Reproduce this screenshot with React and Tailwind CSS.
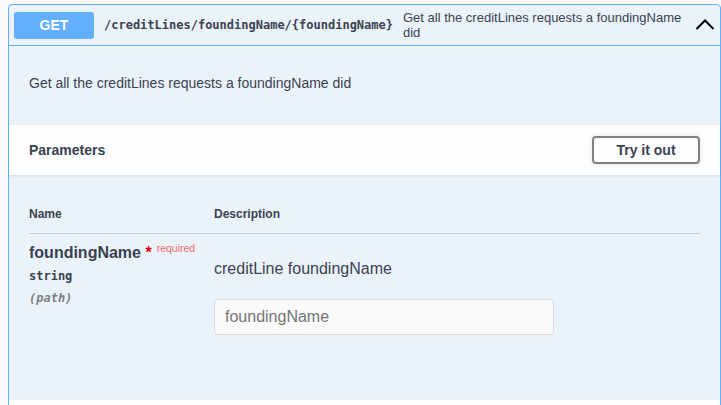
import { useState } from "react";

const sans = { fontFamily: '"Liberation Sans", Arial, sans-serif' };

/* Petite flèche du bouton de repli */
function Chevron() {
  return (
    <svg width="20" height="20" viewBox="0 0 20 20" className="shrink-0">
      <polyline points="1.5,14 10,5.5 18.5,14" fill="none" stroke="#000" strokeWidth="2" />
    </svg>
  );
}

export default function App() {
  const [value, setValue] = useState("");

  return (
    <div className="w-[721px] h-[405px] overflow-hidden bg-[#fafafa] pt-1 pl-2 text-[#3b4151]" style={sans}>
      <div className="border border-[#61affe] rounded-[4px] bg-[#ebf3fa]">
        {/* ---- En-tête de l'opération ---- */}
        <div className="flex items-center h-[41px] px-[5px] border-b border-[#61affe]">
          <span className="w-[80px] h-[27px] shrink-0 flex items-center justify-center rounded-[3px] bg-[#61affe] text-white text-sm font-bold">
            GET
          </span>
          <span
            className="px-[10px] text-[12px] font-bold whitespace-nowrap"
            style={{ fontFamily: '"DejaVu Sans Mono", monospace' }}
          >
            /creditLines/foundingName/&#8203;{"{foundingName}"}
          </span>
          <span className="flex-1 text-[13px] leading-[15px] pr-[8px]">
            Get all the creditLines requests a foundingName did
          </span>
          <Chevron />
        </div>

        {/* ---- Description ---- */}
        <div className="px-5 pt-[28px] pb-[32px]">
          <p className="text-sm leading-[19px]">Get all the creditLines requests a foundingName did</p>
        </div>

        {/* ---- Paramètres ---- */}
        <div className="flex items-center justify-between h-[50px] px-5 bg-white/80 shadow-[0_1px_2px_rgba(0,0,0,0.1)]">
          <h4 className="text-sm font-bold">Parameters</h4>
          <button className="w-[108px] h-[28px] border-2 border-[#808080] rounded-[4px] text-sm font-bold shadow-[0_0_5px_rgba(0,0,0,0.1)]">
            Try it out
          </button>
        </div>

        <div className="px-5 pt-5 pb-[65px]">
          <div className="flex h-[39px] items-center border-b border-[#c6cdd7] text-[12px] font-bold">
            <span className="w-[185px]">Name</span>
            <span>Description</span>
          </div>
          <div className="flex">
            <div className="w-[185px] pt-[10px]">
              <div className="flex items-start">
                <span className="text-base font-bold leading-[18px]">
                  foundingName<span className="text-red-600">&nbsp;*</span>
                </span>
                <span className="text-[10.5px] leading-[11px] pl-[5px] text-[#ff0000]/60 -mt-[1px]">required</span>
              </div>
              <div
                className="mt-[7px] text-[12px] leading-[14px] font-bold"
                style={{ fontFamily: '"DejaVu Sans Mono", monospace' }}
              >
                string
              </div>
              <div
                className="mt-[8px] text-[12px] leading-[14px] font-bold italic text-[#808080]"
                style={{ fontFamily: '"DejaVu Sans Mono", monospace' }}
              >
                (path)
              </div>
            </div>
            <div className="pt-[26px]">
              <p className="text-base leading-[18px]">creditLine foundingName</p>
              <input
                value={value}
                onChange={(e) => setValue(e.target.value)}
                placeholder="foundingName"
                className="mt-[21px] w-[340px] h-[36px] px-[10px] bg-[#fafafa] border border-[#d9d9d9] rounded-[4px] text-base text-[#3b4151] placeholder:text-[#757575] outline-none"
              />
            </div>
          </div>
        </div>

        {/* ---- Réponses (coupé en bas) ---- */}
        <div className="h-[50px] bg-white/80"></div>
      </div>
    </div>
  );
}
